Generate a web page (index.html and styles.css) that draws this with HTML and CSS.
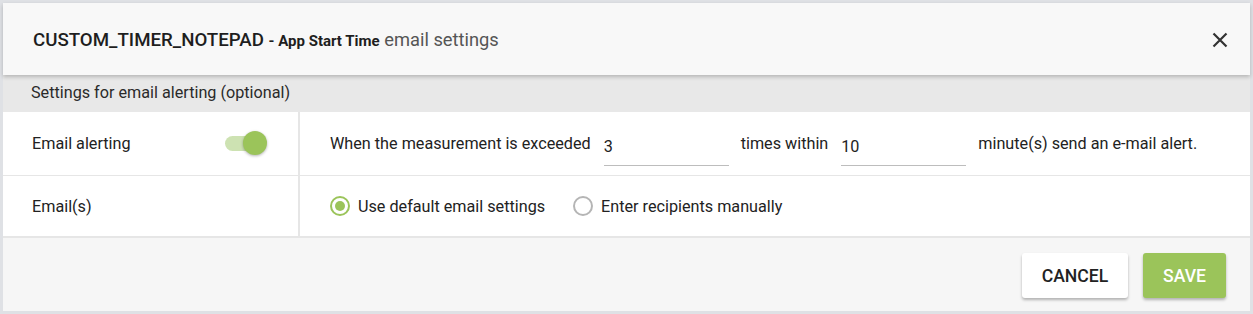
FILE: index.html
```html
<!DOCTYPE html>
<html>
<head>
<meta charset="utf-8">
<link rel="stylesheet" href="styles.css">
</head>
<body>
<div class="dialog">
  <div class="header">
    <div class="title"><span class="t-main">CUSTOM_TIMER_NOTEPAD</span> <span class="t-sub">- App Start Time</span> <span class="t-light">email settings</span></div>
    <button class="close" aria-label="close">
      <svg width="16" height="16" viewBox="0 0 16 16"><path d="M1.5 1.5 L14.5 14.5 M14.5 1.5 L1.5 14.5" stroke="#333" stroke-width="2.2" fill="none"/></svg>
    </button>
  </div>
  <div class="band">Settings for email alerting (optional)</div>
  <div class="row row1">
    <div class="label-cell">
      <span>Email alerting</span>
      <span class="toggle"><span class="track"></span><span class="thumb"></span></span>
    </div>
    <div class="value-cell">
      <span>When the measurement is exceeded</span>
      <span class="input">3</span>
      <span>times within</span>
      <span class="input">10</span>
      <span>minute(s) send an e-mail alert.</span>
    </div>
  </div>
  <div class="row row2">
    <div class="label-cell"><span>Email(s)</span></div>
    <div class="value-cell radios">
      <label class="radio"><span class="dot checked"></span>Use default email settings</label>
      <label class="radio"><span class="dot"></span>Enter recipients manually</label>
    </div>
  </div>
  <div class="footer">
    <button class="btn cancel">CANCEL</button>
    <button class="btn save">SAVE</button>
  </div>
</div>
</body>
</html>
```
FILE: styles.css
```css
* { box-sizing: border-box; }
html, body { margin: 0; padding: 0; }
body {
  background: #dfe1e5;
  font-family: Roboto, "Liberation Sans", sans-serif;
  color: #222;
  padding: 3px;
  width: 1253px;
  height: 314px;
}
.dialog {
  width: 1247px;
  height: 308px;
  background: #fff;
  display: flex;
  flex-direction: column;
}
.header {
  height: 72px;
  flex: none;
  background: #f8f8f8;
  display: flex;
  align-items: center;
  justify-content: space-between;
  padding: 0 22px 0 30px;
  box-shadow: 0 2px 4px rgba(0,0,0,0.22);
  position: relative;
  z-index: 1;
}
.title { font-size: 18.7px; color: #1e1e1e; padding-top: 1px; }
.t-main { font-weight: 500; }
.t-sub { font-weight: 700; font-size: 15px; }
.t-light { font-weight: 400; color: #555; font-size: 18.3px; }
.close {
  border: 0; background: none; padding: 0; width: 16px; height: 16px;
  display: flex; margin-top: 2px;
}
.band {
  height: 37px;
  flex: none;
  background: #e8e8e8;
  font-size: 16.2px;
  padding: 8px 0 0 28px;
  color: #2a2a2a;
}
.row {
  display: grid;
  grid-template-columns: 297px 1fr;
  flex: none;
}
.row1 { height: 64px; border-bottom: 1px solid #e6e6e6; }
.row2 { height: 62px; border-bottom: 2px solid #e6e6e6; }
.label-cell {
  border-right: 2px solid #e6e6e6;
  display: flex;
  align-items: center;
  justify-content: space-between;
  padding: 0 31px 0 29px;
  font-size: 16.2px;
}
.row1 .label-cell, .row1 .value-cell { padding-bottom: 1px; }
.value-cell {
  display: flex;
  align-items: center;
  padding-left: 30px;
  font-size: 16.2px;
}
.input {
  display: inline-block;
  width: 125px;
  height: 32px;
  margin: 13px 12px 0 13px;
  border-bottom: 1px solid #bdbdbd;
  padding-top: 3px;
}
.toggle { position: relative; width: 42px; height: 24px; display: inline-block; }
.track {
  position: absolute; left: 0; top: 5px; width: 34px; height: 15px;
  border-radius: 8px; background: #cde2b2;
}
.thumb {
  position: absolute; right: 0; top: 0; width: 24px; height: 24px; border-radius: 50%;
  background: #9bc45a; box-shadow: 0 1px 3px rgba(0,0,0,0.3);
}
.radios { gap: 28px; padding-left: 30px; padding-bottom: 0; }
.radio { display: flex; align-items: center; gap: 8px; font-size: 16.2px; }
.dot {
  width: 20px; height: 20px; border-radius: 50%;
  border: 2px solid #b5b5b5; position: relative; display: inline-block;
}
.dot.checked { border-color: #9bc45a; }
.dot.checked::after {
  content: ""; position: absolute; left: 3px; top: 3px; width: 10px; height: 10px;
  border-radius: 50%; background: #9bc45a;
}
.footer {
  flex: 1;
  background: #f6f6f6;
  display: flex;
  justify-content: flex-end;
  align-items: flex-start;
  gap: 15px;
  padding: 15px 24px 0 0;
}
.btn {
  height: 45px;
  border: 0;
  border-radius: 3px;
  font-family: Roboto, "Liberation Sans", sans-serif;
  font-size: 17.6px;
  font-weight: 500;
  box-shadow: 0 2px 3px rgba(0,0,0,0.28);
  cursor: pointer;
  padding: 0;
}
.cancel { width: 106px; background: #fff; color: #222; }
.save { width: 83px; background: #9bc45a; color: #fff; }
```
